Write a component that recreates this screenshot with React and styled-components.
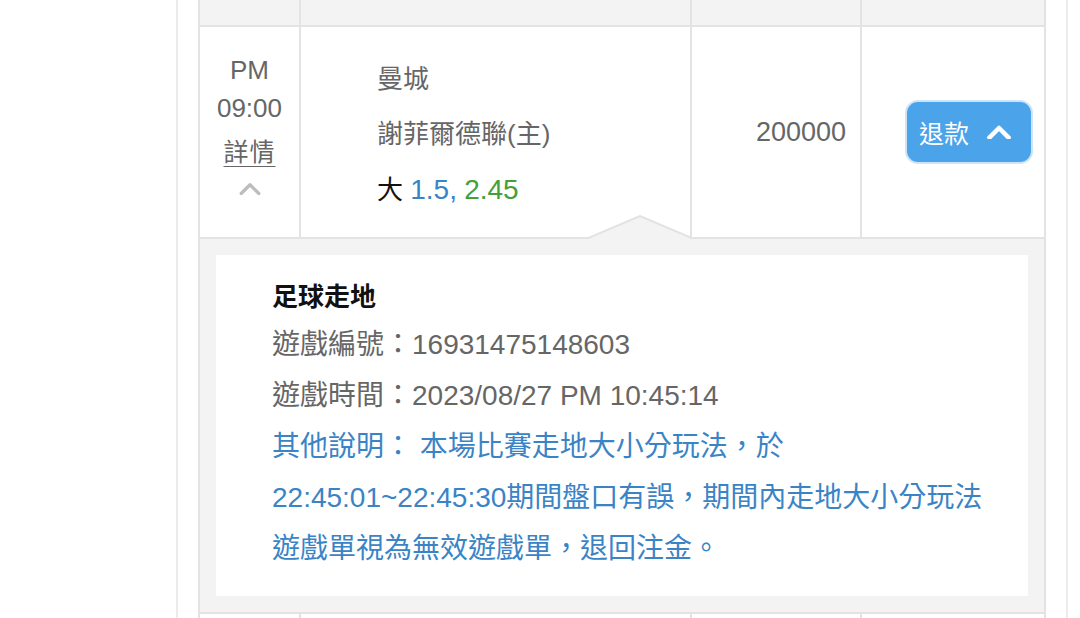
import React from "react";
import styled, { createGlobalStyle } from "styled-components";

const GlobalStyle = createGlobalStyle`
  html, body {
    margin: 0;
    padding: 0;
    background: #fff;
  }
  body {
    font-family: "Liberation Sans", "Noto Sans CJK TC", sans-serif;
    color: #666;
  }
`;

const COLS = "101px 391px 170px 1fr";

function Chevron({ color = "#bdbdbd", width = 22, stroke = 3 }) {
  return (
    <svg width={width} height={width * 0.6} viewBox="0 0 20 12" fill="none">
      <path
        d="M2 10.5 L10 2.5 L18 10.5"
        stroke={color}
        strokeWidth={stroke}
        strokeLinecap="round"
        strokeLinejoin="round"
      />
    </svg>
  );
}

function App() {
  return (
    <>
      <GlobalStyle />
      <Page lang="zh-TW">
        <Sidebar />
        <Main>
          <Table>
            <HeadRow>
              <Cell />
              <Cell />
              <Cell />
              <Cell />
            </HeadRow>
            <BetRow>
              <TimeCell>
                <TimeText>PM</TimeText>
                <TimeText>09:00</TimeText>
                <DetailLink>詳情</DetailLink>
                <ToggleIcon>
                  <Chevron />
                </ToggleIcon>
              </TimeCell>
              <MatchCell>
                <MatchLine>曼城</MatchLine>
                <MatchLine>謝菲爾德聯(主)</MatchLine>
                <MatchLine>
                  <Pick>大</Pick> <Odds tone="blue">1.5,</Odds>{" "}
                  <Odds tone="green">2.45</Odds>
                </MatchLine>
              </MatchCell>
              <AmountCell>200000</AmountCell>
              <ActionCell>
                <RefundButton>
                  退款
                  <Chevron color="#fff" width={24} stroke={3.8} />
                </RefundButton>
              </ActionCell>
            </BetRow>
            <DetailPanel>
              <Notch width="106" height="24" viewBox="0 0 106 24">
                <path d="M0 24 L53 1 L106 24 Z" fill="#f3f3f3" />
                <path
                  d="M0 23.5 L53 1 L106 23.5"
                  fill="none"
                  stroke="#e2e2e2"
                  strokeWidth="2"
                />
              </Notch>
              <DetailCard>
                <DetailTitle>足球走地</DetailTitle>
                <DetailLine>遊戲編號：16931475148603</DetailLine>
                <DetailLine>遊戲時間：2023/08/27 PM 10:45:14</DetailLine>
                <DetailLine tone="blue">
                  其他說明： 本場比賽走地大小分玩法，於
                  22:45:01~22:45:30期間盤口有誤，期間內走地大小分玩法遊戲單視為無效遊戲單，退回注金。
                </DetailLine>
              </DetailCard>
            </DetailPanel>
            <NextRow>
              <Cell />
              <Cell />
              <Cell />
              <Cell />
            </NextRow>
          </Table>
        </Main>
      </Page>
    </>
  );
}

const Page = styled.div`
  display: flex;
  min-height: 618px;
  overflow: hidden;
`;

const Sidebar = styled.div`
  width: 176px;
  flex-shrink: 0;
`;

const Main = styled.div`
  width: 848px;
  padding: 0 20px;
  border-left: 2px solid #ebebeb;
  border-right: 2px solid #ebebeb;
`;

const Table = styled.div`
  border-left: 2px solid #e3e3e3;
  border-right: 2px solid #e3e3e3;
`;

const Row = styled.div`
  display: grid;
  grid-template-columns: ${COLS};
  border-bottom: 2px solid #e3e3e3;
`;

const Cell = styled.div`
  border-right: 2px solid #e3e3e3;
  &:last-child {
    border-right: none;
  }
`;

const HeadRow = styled(Row)`
  height: 25px;
  background: #f3f3f3;
`;

const NextRow = styled(Row)`
  height: 30px;
  border-bottom: none;
  border-top: 2px solid #e3e3e3;
`;

const BetRow = styled(Row)`
  height: 210px;
  border-bottom: none;
`;

const TimeCell = styled(Cell)`
  display: flex;
  flex-direction: column;
  align-items: center;
  padding-top: 24px;
`;

const TimeText = styled.div`
  font-size: 26px;
  line-height: 38px;
  color: #666;
`;

const DetailLink = styled.a`
  margin-top: 6px;
  font-size: 25px;
  line-height: 38px;
  letter-spacing: 1px;
  color: #666;
  text-decoration: underline;
  text-underline-offset: 5px;
  text-decoration-thickness: 1px;
`;

const ToggleIcon = styled.span`
  display: flex;
  margin-top: 11px;
`;

const MatchCell = styled(Cell)`
  padding: 25px 0 0 76px;
`;

const MatchLine = styled.div`
  font-size: 26px;
  line-height: 55px;
  color: #666;
`;

const Pick = styled.span`
  color: #111;
`;

const Odds = styled.span`
  font-size: 28px;
  color: ${(p) => (p.tone === "green" ? "#45a03a" : "#3a84c6")};
`;

const AmountCell = styled(Cell)`
  display: flex;
  align-items: center;
  justify-content: flex-end;
  padding-right: 14px;
  font-size: 27px;
  color: #666;
`;

const ActionCell = styled(Cell)`
  display: flex;
  align-items: center;
  justify-content: flex-end;
  padding-right: 11px;
`;

const RefundButton = styled.button`
  display: flex;
  align-items: center;
  gap: 18px;
  width: 128px;
  height: 64px;
  padding: 0 0 0 12px;
  border: 2px solid #cfe4f7;
  border-radius: 13px;
  background: #4ba3ea;
  color: #fff;
  font-family: inherit;
  font-size: 25px;
  cursor: pointer;
`;

const DetailPanel = styled.div`
  position: relative;
  background: #f3f3f3;
  border-top: 2px solid #e3e3e3;
  padding: 16px;
`;

const Notch = styled.svg`
  position: absolute;
  top: -24px;
  left: 387px;
  display: block;
`;

const DetailCard = styled.div`
  background: #fff;
  padding: 20px 30px 22px 56px;
`;

const DetailTitle = styled.div`
  font-size: 26px;
  font-weight: 700;
  line-height: 44px;
  color: #111;
`;

const DetailLine = styled.div`
  font-size: 28px;
  line-height: 51px;
  color: ${(p) => (p.tone === "blue" ? "#3a84c6" : "#666")};
`;

export default App;
